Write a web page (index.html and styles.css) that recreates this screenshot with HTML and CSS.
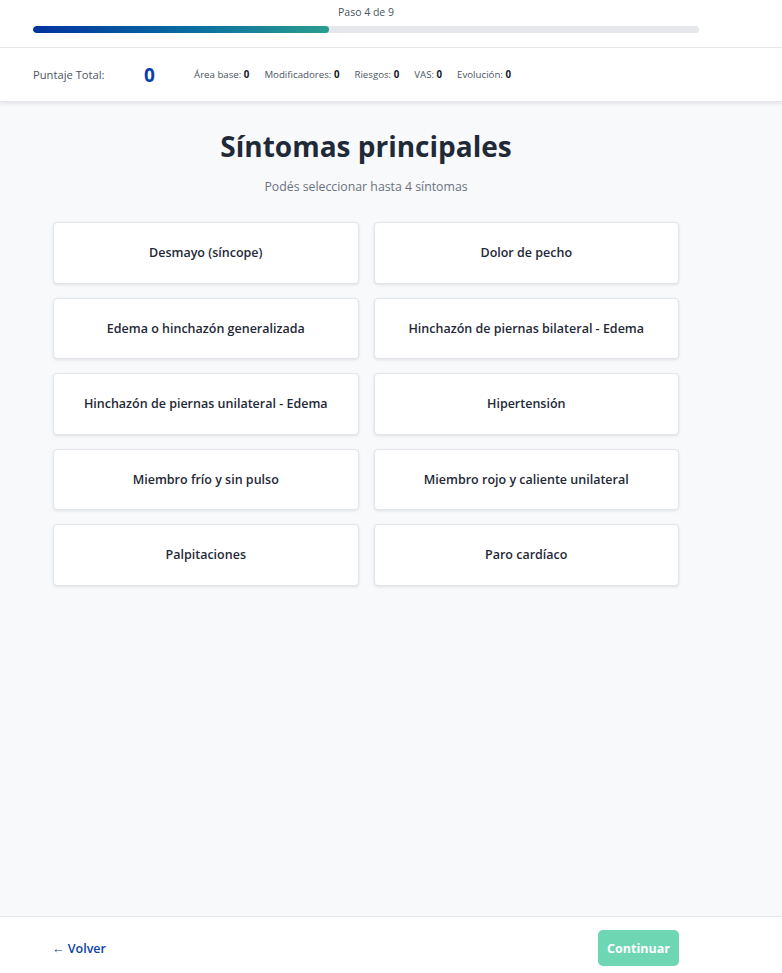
FILE: index.html
```html
<!DOCTYPE html>
<html lang="es">
<head>
<meta charset="utf-8">
<title>Síntomas principales</title>
<link rel="stylesheet" href="styles.css">
</head>
<body>
<div class="page">
  <header class="top">
    <div class="wrap">
      <div class="step">Paso 4 de 9</div>
      <div class="track"><div class="fill" style="width:44.44%"></div></div>
    </div>
  </header>
  <section class="score">
    <div class="wrap score-row">
      <span class="score-label">Puntaje Total:</span>
      <span class="score-total">0</span>
      <span class="score-items">
        <span>Área base: <b>0</b></span>
        <span>Modificadores: <b>0</b></span>
        <span>Riesgos: <b>0</b></span>
        <span>VAS: <b>0</b></span>
        <span>Evolución: <b>0</b></span>
      </span>
    </div>
  </section>
  <main class="main">
    <div class="wrap content">
      <h1 class="title">Síntomas principales</h1>
      <p class="subtitle">Podés seleccionar hasta 4 síntomas</p>
      <div class="grid">
        <button class="card">Desmayo (síncope)</button>
        <button class="card">Dolor de pecho</button>
        <button class="card">Edema o hinchazón generalizada</button>
        <button class="card">Hinchazón de piernas bilateral - Edema</button>
        <button class="card">Hinchazón de piernas unilateral - Edema</button>
        <button class="card">Hipertensión</button>
        <button class="card">Miembro frío y sin pulso</button>
        <button class="card">Miembro rojo y caliente unilateral</button>
        <button class="card">Palpitaciones</button>
        <button class="card">Paro cardíaco</button>
      </div>
    </div>
  </main>
  <footer class="foot">
    <div class="wrap foot-row">
      <a class="back" href="#">← Volver</a>
      <button class="next" disabled>Continuar</button>
    </div>
  </footer>
</div>
</body>
</html>
```
FILE: styles.css
```css
* { box-sizing: border-box; }
html, body { margin: 0; padding: 0; }
body {
  font-family: "Open Sans", "Noto Sans", sans-serif;
  color: #1f2937;
  background: #f8f9fb;
}
.page {
  min-height: 973px;
  display: flex;
  flex-direction: column;
}
.wrap {
  width: 732px;
  padding: 0 33px;
}
.top {
  background: #fff;
  border-bottom: 1px solid #e5e7eb;
  height: 48px;
}
.step {
  text-align: center;
  font-size: 10.5px;
  color: #4b5563;
  padding-top: 4px;
  height: 26px;
  line-height: 16px;
}
.track {
  height: 7px;
  background: #e5e7eb;
  border-radius: 4px;
  overflow: hidden;
}
.fill {
  height: 100%;
  border-radius: 4px;
  background: linear-gradient(90deg, #0033a0, #0a6fa0 55%, #2a9d8f);
}
.score {
  background: #fff;
  height: 54px;
  box-shadow: 0 2px 3px rgba(0,0,0,0.08);
  border-bottom: 1px solid #e5e7eb;
  position: relative;
}
.score-row {
  display: flex;
  align-items: center;
  height: 53px;
}
.score-label {
  font-size: 11.2px;
  color: #4b5563;
  width: 111px;
}
.score-total {
  font-size: 19px;
  font-weight: 700;
  color: #0b3fa8;
  width: 50px;
}
.score-items {
  display: flex;
  gap: 15px;
  font-size: 9.7px;
  color: #4b5563;
}
.score-items b { color: #111827; }
.main {
  flex: 1;
}
.content {
  padding-top: 23px;
  padding-bottom: 30px;
}
.title {
  margin: 0;
  text-align: center;
  font-size: 28px;
  font-weight: 700;
  color: #1f2937;
  line-height: 42px;
}
.subtitle {
  margin: 11px 0 0;
  text-align: center;
  font-size: 12.3px;
  color: #6b7280;
  line-height: 18px;
}
.grid {
  margin: 26px 20px 0;
  display: grid;
  grid-template-columns: 1fr 1fr;
  column-gap: 15px;
  row-gap: 14px;
}
.card {
  height: 61.5px;
  background: #fff;
  border: 1px solid #e2e5ea;
  border-radius: 4px;
  box-shadow: 0 1px 3px rgba(0,0,0,0.1);
  font-family: inherit;
  font-size: 12.5px;
  font-weight: 600;
  color: #1f2937;
  padding: 0 10px;
}
.foot {
  background: #fff;
  border-top: 1px solid #e5e7eb;
  height: 57px;
}
.foot-row {
  display: flex;
  align-items: center;
  justify-content: space-between;
  height: 62px;
  padding: 0 53px 0 52px;
}
.back {
  color: #0b3fa8;
  font-size: 12.5px;
  font-weight: 600;
  text-decoration: none;
}
.next {
  background: #6fd6b4;
  color: #fff;
  border: none;
  border-radius: 5px;
  font-family: inherit;
  font-size: 12.5px;
  font-weight: 700;
  width: 81px;
  height: 36px;
  padding: 0;
}
```
